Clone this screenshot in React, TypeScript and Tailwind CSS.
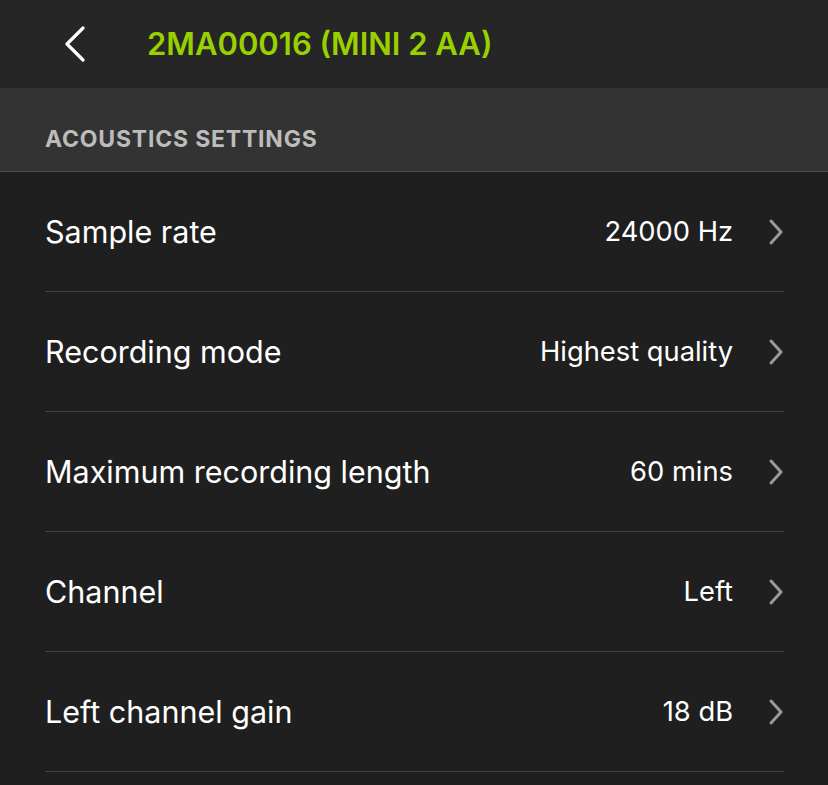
import React from "react";

const rows = [
  { label: "Sample rate", value: "24000 Hz" },
  { label: "Recording mode", value: "Highest quality" },
  { label: "Maximum recording length", value: "60 mins" },
  { label: "Channel", value: "Left" },
  { label: "Left channel gain", value: "18 dB" },
];

function Chevron({ className }: { className?: string }) {
  return (
    <svg viewBox="0 0 16 28" className={className} fill="none" stroke="currentColor" strokeWidth="3" strokeLinecap="round" strokeLinejoin="round">
      <path d="M3 3 L13 14 L3 25" />
    </svg>
  );
}

export default function App() {
  return (
    <div className="w-[828px] h-[785px] overflow-hidden bg-[#1f1f1f] text-white" style={{ fontFamily: "Inter, 'Noto Sans', sans-serif" }}>
      <div className="h-[88px] bg-[#262626] flex items-center">
        <div className="w-[147px] flex items-center pl-[63px]">
          <svg viewBox="0 0 24 36" className="w-[24px] h-[36px]" fill="none" stroke="white" strokeWidth="3.2" strokeLinecap="round" strokeLinejoin="round">
            <path d="M20 2 L4 18 L20 34" />
          </svg>
        </div>
        <div className="text-[31px] font-semibold text-[#99d100]">2MA00016 (MINI 2 AA)</div>
      </div>
      <div className="h-[84px] bg-[#333333] border-b border-[#505050] flex items-end pb-[15px] pl-[45px]">
        <div className="text-[23px] font-bold tracking-[0.8px] text-[#bcbcbc]">ACOUSTICS SETTINGS</div>
      </div>
      <div className="pl-[45px] pr-[44px]">
        {rows.map((r) => (
          <div key={r.label} className="h-[120px] flex items-center border-b border-[#434343]">
            <div className="flex-1 text-[30.5px] text-white">{r.label}</div>
            <div className="text-[27.3px] text-white mr-[35px] mt-[2px]">{r.value}</div>
            <Chevron className="w-[16px] h-[28px] text-[#9a9a9a]" />
          </div>
        ))}
      </div>
    </div>
  );
}
